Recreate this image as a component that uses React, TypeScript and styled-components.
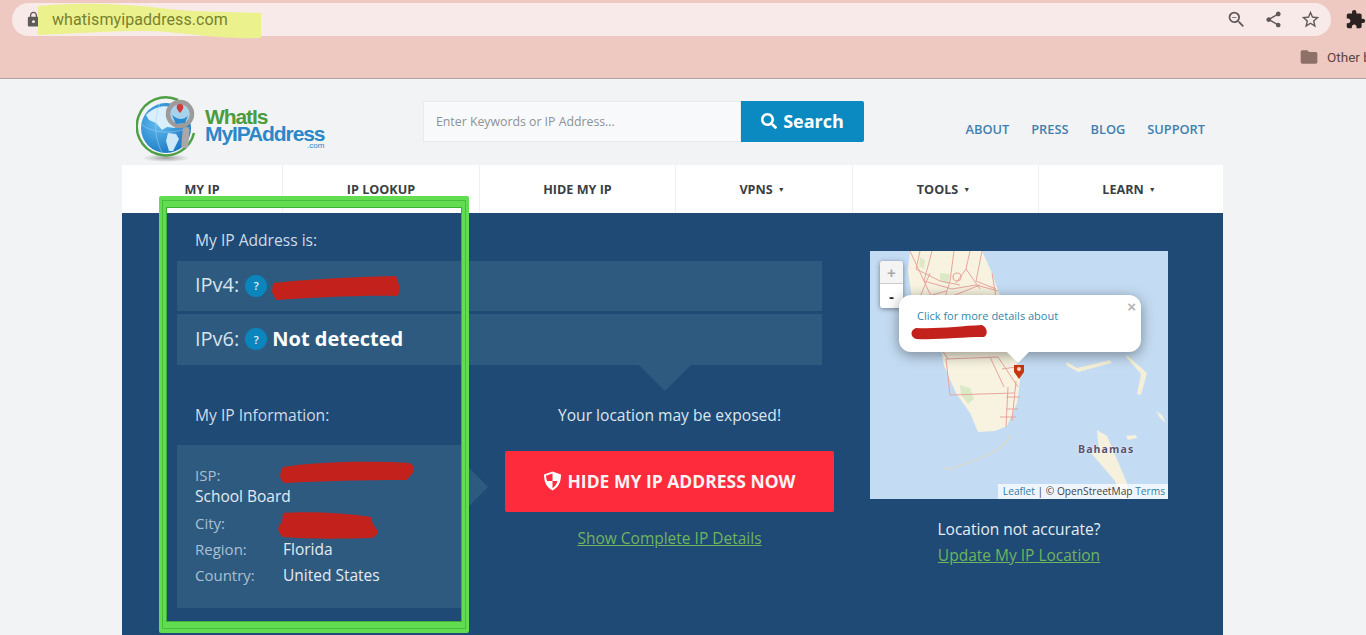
import React from "react";
import styled, { createGlobalStyle } from "styled-components";
import { MdExtension, MdFolder, MdLock, MdShare, MdStarBorder, MdZoomOut } from "react-icons/md";
import { FaSearch } from "react-icons/fa";

const Global = createGlobalStyle`
  html, body { margin: 0; padding: 0; height: 100%; overflow: hidden; background: #f1f3f5; }
  body { font-family: "Open Sans", "Noto Sans", sans-serif; }
  * { box-sizing: border-box; }
`;

const Screen = styled.div`
  position: relative;
  width: 1366px;
  height: 635px;
  overflow: hidden;
`;

const BrowserBar = styled.header`
  height: 79px;
  padding-top: 3px;
  background: #eec9c2;
  border-bottom: 1px solid #b5a19c;
`;

const TopRow = styled.div`
  display: flex;
  align-items: center;
  padding-left: 12px;
`;

const UrlPill = styled.div`
  position: relative;
  width: 1320px;
  height: 33px;
  display: flex;
  align-items: center;
  padding-left: 13px;
  padding-right: 10px;
  border-radius: 17px;
  background: #f9eaea;
  color: #5f5a5a;
  & > svg:first-child { flex: none; }
`;

const Highlight = styled.svg`
  position: absolute;
  left: 26px;
  top: 0;
`;

const UrlText = styled.span`
  position: relative;
  margin-left: 10px;
  font-family: Roboto, sans-serif;
  font-size: 16px;
  letter-spacing: 0.08px;
  color: #78802f;
`;

const PillIcons = styled.div`
  display: flex;
  align-items: center;
  gap: 17px;
  margin-left: auto;
  color: #5f5a5a;
`;

const Puzzle = styled.div`
  display: flex;
  margin-left: 14px;
  color: #2a2322;
`;

const BookmarkRow = styled.div`
  display: flex;
  align-items: center;
  gap: 8px;
  height: 22px;
  margin-top: 10px;
  padding-left: 1299px;
  overflow: hidden;
  color: #8d7068;
  white-space: nowrap;
  & > svg { flex: none; }
`;

const BookmarkText = styled.span`
  flex: none;
  font-family: Roboto, sans-serif;
  font-size: 13.5px;
  color: #5f4540;
`;

const Container = styled.main`
  width: 1101px;
  margin-left: 122px;
`;

const SiteHeader = styled.div`
  display: flex;
  height: 86px;
  padding-top: 22px;
`;

const Logo = styled.div`
  display: flex;
  align-items: flex-start;
  width: 287px;
  margin-left: 14px;
  margin-top: -6px;
`;

const LogoWords = styled.div`
  display: flex;
  flex-direction: column;
  margin-left: 3px;
  margin-top: 13px;
  font-family: "Liberation Sans", sans-serif;
  font-weight: 700;
  font-size: 21px;
  line-height: 17px;
  letter-spacing: -1.1px;
`;

const LogoWhat = styled.span`
  color: #4c9c3f;
`;

const LogoMy = styled.span`
  color: #2b87c8;
`;

const LogoCom = styled.span`
  align-self: flex-end;
  font-size: 8px;
  line-height: 7px;
  font-weight: 400;
  letter-spacing: 0;
  color: #2b87c8;
`;

const SearchBox = styled.div`
  display: flex;
  width: 441px;
  height: 41px;
`;

const SearchInput = styled.div`
  width: 318px;
  display: flex;
  align-items: center;
  padding-left: 12px;
  background: #f8f9fa;
  border: 1px solid #e8eaec;
  font-size: 12.3px;
  color: #8d9297;
`;

const SearchButton = styled.button`
  flex: 1;
  display: flex;
  align-items: center;
  justify-content: center;
  gap: 6px;
  padding-bottom: 2px;
  border: 0;
  border-radius: 0 2px 2px 0;
  background: #0a8ac0;
  color: #fff;
  font: 700 18px "Open Sans", sans-serif;
`;

const TopLinks = styled.nav`
  display: flex;
  gap: 22px;
  margin-left: auto;
  padding-right: 18px;
  padding-top: 20px;
`;

const TopLink = styled.a`
  font-size: 12.8px;
  font-weight: 600;
  line-height: 17px;
  color: #3f7fb0;
`;

const Nav = styled.nav`
  display: flex;
  height: 48px;
  background: #fff;
`;

const NavItem = styled.div<{ $w: number; $menu: boolean }>`
  width: ${(p) => p.$w}px;
  display: flex;
  align-items: center;
  justify-content: center;
  gap: 5px;
  padding-right: ${(p) => (p.$menu ? 4 : 0)}px;
  border-right: 1px solid #f0f0f0;
  font-size: 12.6px;
  font-weight: 700;
  color: #3a3f44;
  &:last-child { border-right: 0; }
`;

const Caret = styled.span`
  font-size: 7px;
  line-height: 1;
`;

const Panel = styled.section`
  display: grid;
  grid-template-columns: 657px 298px;
  column-gap: 36px;
  height: 422px;
  padding: 0 55px;
  background: #1f4a75;
  color: #dfe8f0;
`;

const Main = styled.div`
  min-width: 0;
`;

const Heading = styled.h2`
  height: 42px;
  margin: 6px 0 0;
  padding-left: 18px;
  font-size: 15.6px;
  font-weight: 400;
  line-height: 42px;
  color: #cfdbe6;
`;

const IpRow = styled.div<{ $h: number; $tip?: boolean }>`
  position: relative;
  display: flex;
  align-items: center;
  width: 645px;
  height: ${(p) => p.$h}px;
  margin-bottom: 3px;
  padding-left: 18px;
  padding-bottom: 3px;
  background: #2e5a80;
  font-size: 20px;
  color: #d8e3ec;
  ${(p) =>
    p.$tip &&
    `&::after {
      content: "";
      position: absolute;
      left: 462px;
      top: 100%;
      border-left: 26px solid transparent;
      border-right: 26px solid transparent;
      border-top: 26px solid #2e5a80;
    }`}
`;

const Help = styled.span`
  width: 22px;
  height: 22px;
  display: inline-flex;
  align-items: center;
  justify-content: center;
  margin: 2px 5px 0 6px;
  border-radius: 50%;
  background: #0a86bd;
  color: #e6f3fa;
  font-size: 11px;
  font-weight: 600;
`;

const Strong = styled.strong`
  font-weight: 700;
  font-size: 20px;
  color: #fff;
`;

const Scribble = styled.svg<{ $x: number; $y: number }>`
  position: absolute;
  left: ${(p) => p.$x}px;
  top: ${(p) => p.$y}px;
  overflow: visible;
`;

const Lower = styled.div`
  display: grid;
  grid-template-columns: 291px 329px;
  column-gap: 37px;
  margin-top: 30px;
`;

const LowerHeading = styled(Heading)`
  height: 40px;
  margin: 0;
  line-height: 40px;
`;

const InfoBox = styled.div`
  position: relative;
  height: 163px;
  margin-top: 10px;
  padding: 20px 18px 0;
  background: #2e5a80;
  &::after {
    content: "";
    position: absolute;
    left: 100%;
    top: 22px;
    border-top: 20px solid transparent;
    border-bottom: 20px solid transparent;
    border-left: 20px solid #2e5a80;
  }
`;

const InfoRow = styled.div`
  position: relative;
  display: flex;
  min-height: 21px;
  margin-bottom: 5px;
  line-height: 21px;
  font-size: 15.5px;
  color: #e3ebf2;
`;

const IspBlock = styled.div`
  position: relative;
  margin-bottom: 6px;
  line-height: 21px;
  font-size: 15.5px;
  color: #e3ebf2;
`;

const InfoLabel = styled.span`
  width: 88px;
  flex: none;
  display: block;
  font-size: 15px;
  color: #a9c0d4;
`;

const Cta = styled.div`
  display: flex;
  flex-direction: column;
  align-items: stretch;
  text-align: center;
`;

const Exposed = styled.p`
  height: 40px;
  margin: 0;
  font-size: 15.6px;
  line-height: 40px;
  color: #dce6ef;
`;

const HideButton = styled.button`
  height: 61px;
  margin-top: 16px;
  display: flex;
  align-items: center;
  justify-content: center;
  gap: 5px;
  padding-bottom: 2px;
  border: 0;
  border-radius: 2px;
  background: #fd2b3b;
  color: #fdf3f3;
  font: 700 17.5px "Open Sans", sans-serif;
`;

const GreenLink = styled.a`
  display: block;
  font-size: 15.5px;
  line-height: 24px;
  color: #6fb45e;
  text-decoration: underline;
`;

const DetailsLink = styled(GreenLink)`
  margin-top: 14px;
`;

const Aside = styled.aside`
  padding-top: 38px;
  text-align: center;
`;

const MapFrame = styled.div`
  position: relative;
  width: 298px;
  height: 248px;
  overflow: hidden;
  background: #c4dcf3;
`;

const MapArt = styled.svg`
  display: block;
`;

const ZoomControl = styled.div`
  position: absolute;
  left: 10px;
  top: 10px;
  width: 23px;
  display: flex;
  flex-direction: column;
  border-radius: 3px;
  overflow: hidden;
  box-shadow: 0 1px 5px rgba(0, 0, 0, 0.45);
`;

const ZoomBtn = styled.div<{ $off?: boolean }>`
  height: ${(p) => (p.$off ? 23 : 24)}px;
  display: flex;
  align-items: center;
  justify-content: center;
  border-bottom: ${(p) => (p.$off ? "1px solid #ccc" : "0")};
  background: ${(p) => (p.$off ? "#f4f4f4" : "#fff")};
  color: ${(p) => (p.$off ? "#aaa" : "#222")};
  font: 700 15px "Liberation Sans", sans-serif;
`;

const Popup = styled.div`
  position: absolute;
  left: 29px;
  top: 44px;
  width: 242px;
  height: 57px;
  padding: 14px 18px 0;
  border-radius: 12px;
  background: #fff;
  box-shadow: 0 3px 14px rgba(0, 0, 0, 0.4);
  text-align: left;
  font-size: 11px;
  line-height: 14px;
  color: #2f88ae;
  &::after {
    content: "";
    position: absolute;
    left: 108px;
    top: 100%;
    border-left: 11px solid transparent;
    border-right: 11px solid transparent;
    border-top: 11px solid #fff;
  }
`;

const PopupClose = styled.span`
  position: absolute;
  right: 5px;
  top: 3px;
  font: 700 15px "Liberation Sans", sans-serif;
  color: #b5b5b5;
`;

const Marker = styled.svg`
  position: absolute;
  left: 144px;
  top: 113px;
`;

const PlaceName = styled.span`
  position: absolute;
  left: 208px;
  top: 191px;
  font-size: 10.5px;
  font-weight: 700;
  letter-spacing: 1.1px;
  line-height: 14px;
  color: #5a5070;
  text-shadow: 0 0 2px #fff;
`;

const Attribution = styled.div`
  position: absolute;
  right: 0;
  bottom: 0;
  height: 15px;
  padding: 0 3px 0 5px;
  background: rgba(255, 255, 255, 0.72);
  font-size: 10.2px;
  line-height: 15px;
  white-space: nowrap;
  color: #444;
`;

const AttrLink = styled.span`
  color: #2f80a8;
`;

const NotAccurate = styled.p`
  margin: 18px 0 2px;
  font-size: 15.5px;
  line-height: 24px;
  color: #e6edf3;
`;

const GreenFrame = styled.div`
  position: absolute;
  left: 159px;
  top: 196px;
  width: 310px;
  height: 437px;
  border-style: solid;
  border-color: #62dc50;
  border-width: 11px 7px 11px 7px;
  border-radius: 2px;
  box-shadow: inset 0 0 0 1px #3eb035;
  pointer-events: none;
  &::before {
    content: "";
    position: absolute;
    inset: -7px -4px;
    border: 1px solid #46bd3c;
  }
`;

const tabs: [string, number, boolean][] = [
  ["MY IP", 161, false],
  ["IP LOOKUP", 197, false],
  ["HIDE MY IP", 196, false],
  ["VPNS", 177, true],
  ["TOOLS", 186, true],
  ["LEARN", 184, true],
];

const LogoMark = () => (
  <svg width="66" height="68" viewBox="0 0 66 68">
    <defs>
      <radialGradient id="g" cx="0.35" cy="0.4" r="0.75">
        <stop offset="0" stopColor="#62bdf0" />
        <stop offset="1" stopColor="#0f6fbd" />
      </radialGradient>
      <radialGradient id="s" cx="0.5" cy="0.5" r="0.5">
        <stop offset="0" stopColor="#666" stopOpacity=".6" />
        <stop offset="1" stopColor="#777" stopOpacity="0" />
      </radialGradient>
    </defs>
    <ellipse cx="30" cy="63" rx="24" ry="4" fill="url(#s)" />
    <path d="M42 5A29 29 0 1 0 58 38" fill="none" stroke="#4f9f45" strokeWidth="2.500" />
    <circle cx="30" cy="33" r="25" fill="url(#g)" />
    <path d="M10 20c8-8 18-10 24-8l2 8-5 2 4 4 7 1-3 6-8-1-5 3-6-7-7-3z" fill="#d9effb" />
    <path d="M32 38l8 1 3 5-6 12-4 0-3-10z" fill="#cde8f8" />
    <path d="M6 30c12 8 30 10 48 2M24 8c-6 16-6 34 2 50" fill="none" stroke="#a9d6f3" strokeWidth=".5" />
    <rect x="46" y="32" width="7" height="21" rx="3" fill="#a9a7a7" transform="rotate(5 49 42)" />
    <circle cx="44" cy="19" r="12" fill="#a6d2ec" stroke="#9f9b9b" strokeWidth="4.500" />
    <path d="M36 20c6 5 11 5 16 1l-3 7-9 1z" fill="#2a8bd0" />
    <path d="M44 9a3.300 3.300 0 0 1 3.300 3.300c0 2.400-3.300 5.700-3.300 5.700s-3.300-3.300-3.300-5.700A3.300 3.300 0 0 1 44 9z" fill="#cf3b36" />
  </svg>
);

const ShieldIcon = () => (
  <svg width="19" height="20" viewBox="0 0 19 20">
    <path d="M9.500 0.500L18 3.500c0 7-2 12.500-8.500 16C3 16 1 10.500 1 3.500z" fill="#fff" />
    <path d="M9.500 2.500L3 4.800c.2 2.200.6 3.900 1.200 5.300h5.300zM9.500 10.100v7.200c2.500-1.600 4.100-4 5-7.200z" fill="#fd2b3b" />
  </svg>
);

const red = "#c3221c";

const MapDrawing = () => (
  <MapArt width="298" height="248" viewBox="0 0 298 248">
    <rect width="298" height="248" fill="#c4dcf3" />
    <path
      d="M40 0L112 0 122 22 130 45 136 70 146 108 150 130 147 152 137 175 125 180 108 181 100 162 86 142 74 115 70 92 66 70 42 48 38 20z"
      fill="#f7f3e0"
    />
    <path d="M50 6l5 3-1 9-5-3zM70 22l10 1-2 10-8-3z" fill="#dbe9c6" />
    <path d="M90 134l10 3 4 11-6 5-7-9z" fill="#dbe9c6" />
    <path d="M197 111l10 6 33-8 2 3-34 9-12-7z" fill="#f3efd8" />
    <path d="M257 104l20 18-6 22-4-1 4-20-15-17z" fill="#f3efd8" />
    <path d="M227 179l10 6 20 47 2 16h-8l-6-18-24-28 8-1z" fill="#f5f1dc" />
    <path d="M256 185l10-1 1 3-9 2z" fill="#f5f1dc" />
    <path d="M286 160l6 4 4 8-6-5z" fill="#f5f1dc" />
    <path d="M140 184c-6 16-30 24-60 34l-6-1" fill="none" stroke="#ddd9c5" strokeWidth="1.300" />
    <path
      d="M40 0l14 30 12 26M50 0l-4 18 24 12 20 4M62 0l-8 30 28 8 24-4 22 6M112 0l-6 30 20 8M86 32l10-14 4-18M70 50l40-16M76 40l-34 10M122 22l4 24M96 18l14 20M60 22l-10 24M84 0l-4 30 -8 26"
      fill="none"
      stroke="#e7a59b"
      strokeWidth="1"
    />
    <circle cx="87" cy="26" r="4" fill="none" stroke="#e7a59b" strokeWidth="1.200" />
    <path
      d="M76 108l4 36 64-2M76 108l52-2 20 30M120 106l14 30M138 136l-2 40M146 130l-4 40M136 146h14M136 158h12M130 166h16M132 118l14-2M70 96l8 12"
      fill="none"
      stroke="#e7a59b"
      strokeWidth="1"
    />
  </MapArt>
);

export default function App() {
  return (
    <Screen>
      <Global />
      <BrowserBar>
        <TopRow>
          <UrlPill>
            <MdLock size={17} />
            <Highlight width="224" height="36" viewBox="0 0 224 36">
              <path d="M0 3C40 -1 90 1 130 6C160 9 200 9 223 10V35C190 36 170 33 130 29C90 26 40 31 0 32z" fill="#ebf18c" />
            </Highlight>
            <UrlText>whatismyipaddress.com</UrlText>
            <PillIcons>
              <MdZoomOut size={21} />
              <MdShare size={19} />
              <MdStarBorder size={21} />
            </PillIcons>
          </UrlPill>
          <Puzzle>
            <MdExtension size={21} />
          </Puzzle>
        </TopRow>
        <BookmarkRow>
          <MdFolder size={20} />
          <BookmarkText>Other bookmarks</BookmarkText>
        </BookmarkRow>
      </BrowserBar>

      <Container>
        <SiteHeader>
          <Logo>
            <LogoMark />
            <LogoWords>
              <LogoWhat>WhatIs</LogoWhat>
              <LogoMy>MyIPAddress</LogoMy>
              <LogoCom>.com</LogoCom>
            </LogoWords>
          </Logo>
          <SearchBox>
            <SearchInput>Enter Keywords or IP Address...</SearchInput>
            <SearchButton>
              <FaSearch size={16} />
              Search
            </SearchButton>
          </SearchBox>
          <TopLinks>
            <TopLink>ABOUT</TopLink>
            <TopLink>PRESS</TopLink>
            <TopLink>BLOG</TopLink>
            <TopLink>SUPPORT</TopLink>
          </TopLinks>
        </SiteHeader>

        <Nav>
          {tabs.map(([label, w, caret]) => (
            <NavItem key={label} $w={w} $menu={caret}>
              {label}
              {caret && <Caret>▼</Caret>}
            </NavItem>
          ))}
        </Nav>

        <Panel>
          <Main>
            <Heading>My IP Address is:</Heading>
            <IpRow $h={50}>
              IPv4:
              <Help>?</Help>
              <Scribble $x={93} $y={13} width="132" height="27" viewBox="0 0 132 27">
                <path d="M3 9C30 6 80 3 126 2L130 14 128 22C90 21 40 24 6 26L2 18z" fill={red} />
              </Scribble>
            </IpRow>
            <IpRow $h={51} $tip>
              IPv6:
              <Help>?</Help>
              <Strong>Not detected</Strong>
            </IpRow>
            <Lower>
              <div>
                <LowerHeading>My IP Information:</LowerHeading>
                <InfoBox>
                  <IspBlock>
                    <InfoLabel>ISP:</InfoLabel>
                    School Board
                    <Scribble $x={84} $y={-4} width="136" height="23" viewBox="0 0 136 23">
                      <path d="M4 6C40 0 100 0 130 2C137 5 136 10 132 14L128 19C90 19 40 20 6 22C0 20 0 12 4 6z" fill={red} />
                    </Scribble>
                  </IspBlock>
                  <InfoRow>
                    <InfoLabel>City:</InfoLabel>
                    <Scribble $x={82} $y={-2} width="102" height="28" viewBox="0 0 102 28">
                      <path d="M6 2C30 0 70 2 94 6L96 14C102 18 102 26 94 27C60 28 30 28 6 26C0 22 0 14 5 12z" fill={red} />
                    </Scribble>
                  </InfoRow>
                  <InfoRow>
                    <InfoLabel>Region:</InfoLabel>
                    Florida
                  </InfoRow>
                  <InfoRow>
                    <InfoLabel>Country:</InfoLabel>
                    United States
                  </InfoRow>
                </InfoBox>
              </div>
              <Cta>
                <Exposed>Your location may be exposed!</Exposed>
                <HideButton>
                  <ShieldIcon />
                  HIDE MY IP ADDRESS NOW
                </HideButton>
                <DetailsLink>Show Complete IP Details</DetailsLink>
              </Cta>
            </Lower>
          </Main>

          <Aside>
            <MapFrame>
              <MapDrawing />
              <Marker width="10" height="15" viewBox="0 0 10 15">
                <path d="M0 1h10v7l-5 7-5-7z" fill="#c5370f" />
                <circle cx="5" cy="5" r="2" fill="#f5d5c8" />
              </Marker>
              <ZoomControl>
                <ZoomBtn $off>+</ZoomBtn>
                <ZoomBtn>-</ZoomBtn>
              </ZoomControl>
              <Popup>
                Click for more details about
                <PopupClose>×</PopupClose>
                <Scribble $x={11} $y={30} width="77" height="15" viewBox="0 0 77 15">
                  <path d="M6 3C30 4 50 1 72 0C78 3 78 10 74 12C50 12 30 15 6 14C0 12 0 5 6 3z" fill={red} />
                </Scribble>
              </Popup>
              <PlaceName>Bahamas</PlaceName>
              <Attribution>
                <AttrLink>Leaflet</AttrLink> | © OpenStreetMap <AttrLink>Terms</AttrLink>
              </Attribution>
            </MapFrame>
            <NotAccurate>Location not accurate?</NotAccurate>
            <GreenLink>Update My IP Location</GreenLink>
          </Aside>
        </Panel>
      </Container>
      <GreenFrame />
    </Screen>
  );
}
